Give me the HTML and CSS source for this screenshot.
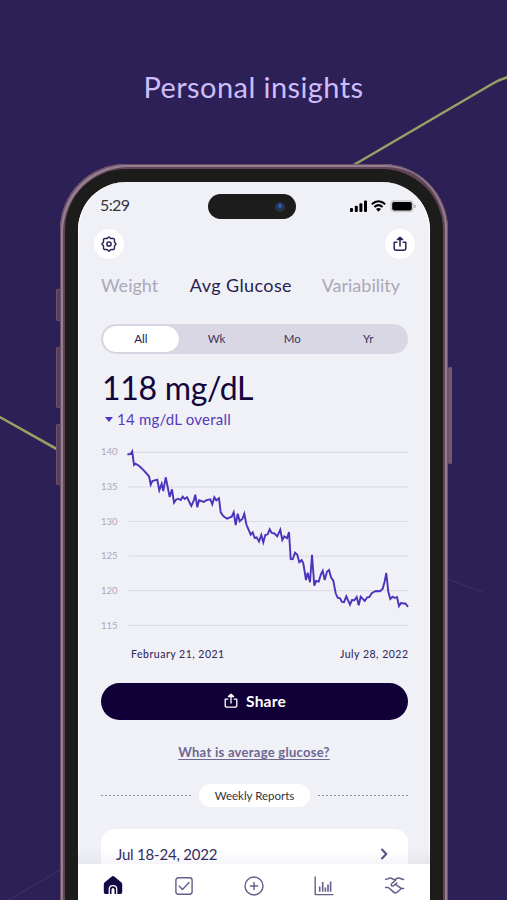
FILE: index.html
```
<!doctype html>
<html lang="en">
<head>
<meta charset="utf-8">
<meta name="viewport" content="width=device-width, initial-scale=1">
<title>Personal insights</title>
<link rel="stylesheet" href="styles.css">
</head>
<body>
<svg class="trend" viewBox="0 0 507 900" fill="none">
<path class="trend-line" d="M352 166 L492 84 Q500 79 510 76.5"/>
<path class="trend-line" d="M-2 416 L62 452"/>
<path class="trend-faint" d="M448 579 L482 592"/>
<path class="trend-faint" d="M0 905 L62 869"/>
</svg>

<h1 class="headline">Personal insights</h1>

<div class="phone">
<span class="key key-mute"></span>
<span class="key key-up"></span>
<span class="key key-down"></span>
<span class="key key-power"></span>
<div class="bezel">
<div class="screen">
<div class="island"><span class="lens"></span></div>

<header class="status">
<span class="time">5:29</span>
<svg class="status-icons" width="68" height="14" viewBox="0 0 68 14">
<rect x="1" y="9" width="3" height="4" rx="1"/>
<rect x="5.8" y="6.8" width="3" height="6.2" rx="1"/>
<rect x="10.4" y="4.2" width="3" height="8.8" rx="1"/>
<rect x="15" y="1.6" width="3" height="11.4" rx="1"/>
<path class="arc" d="M22.8 5.3 Q29.5 -.9 36.2 5.3 M25.4 8 Q29.5 4.2 33.6 8"/>
<path d="M27 10 Q29.5 8 32 10 L29.5 12.7 Z"/>
<rect class="cell" x="41.8" y="1.7" width="22.4" height="11" rx="3"/>
<rect x="43.2" y="3" width="19.6" height="8.4" rx="1.8"/>
<rect class="nub" x="65.2" y="5.6" width="1.4" height="3.4" rx=".7"/>
</svg>
</header>

<div class="toolbar">
<span class="round">
<svg width="18" height="18" viewBox="0 0 18 18">
<path d="M7.6 3.2 Q9 .8 10.4 3.2 Q11.1 3.8 12.1 3.5 Q14.8 2.9 14.5 5.9 Q14.2 6.9 14.8 7.6 Q17.2 9 14.8 10.4 Q14.2 11.1 14.5 12.1 Q14.8 15.1 12.1 14.5 Q11.1 14.2 10.4 14.8 Q9 17.2 7.6 14.8 Q6.9 14.2 5.9 14.5 Q3.2 15.1 3.5 12.1 Q3.8 11.1 3.2 10.4 Q.8 9 3.2 7.6 Q3.8 6.9 3.5 5.9 Q3.2 2.9 5.9 3.5 Q6.9 3.8 7.6 3.2 Z"/>
<circle cx="9" cy="9" r="2.1"/>
</svg>
</span>
<span class="round">
<svg width="16" height="18" viewBox="0 0 16 18">
<path d="M4.8 7.2 H2.2 V13.2 Q2.2 15.2 4.2 15.2 H11.8 Q13.8 15.2 13.8 13.2 V7.2 H11.2 M8 11 V2.6 M5.4 4.6 L8 2.2 L10.6 4.6 Z"/>
</svg>
</span>
</div>

<nav class="tabs">
<span>Weight</span>
<span class="active">Avg Glucose</span>
<span>Variability</span>
</nav>

<div class="range">
<span class="on">All</span><span>Wk</span><span>Mo</span><span>Yr</span>
</div>

<div class="value">118 mg/dL</div>
<div class="change"><i class="down"></i>14 mg/dL overall</div>

<svg class="chart" width="307" height="200" viewBox="0 0 307 200">
<g class="grid">
<path d="M28 12.3 H307 M28 46.9 H307 M28 81.5 H307 M28 116.1 H307 M28 150.7 H307 M28 185.3 H307"/>
</g>
<g class="axis">
<text x="0" y="15.3">140</text>
<text x="0" y="50">135</text>
<text x="0" y="84.7">130</text>
<text x="0" y="119.3">125</text>
<text x="0" y="153.9">120</text>
<text x="0" y="188.7">115</text>
</g>
<polyline class="series" points="27.2,14.3 29.8,14 31.2,11.5 33,25 34.5,23.7 38.3,26 43,30.7 48,36.3 49.7,44.7 51.3,41 56.3,39.7 58.3,50.3 60.7,43.7 62.3,51 64.7,37.3 68.7,57 71,49.3 73,62.7 75,59.7 77.3,58.7 79.7,60 81.7,56.7 83.7,59 86,57.3 90.3,66 92.7,60.7 94.3,54.7 96.3,67.3 98,60.3 103,62 105,60.3 109.3,59.3 111.3,64.3 113.3,57.3 115.3,60.3 118,58.3 119.7,72.3 122.3,76 126,78.7 130.7,76.7 132.7,72.3 134.7,85 136.7,73.7 138.7,81.3 141.3,79 143.3,73.7 145.3,84.3 149.7,94.7 151.7,92.3 153.7,98 155.7,97.3 158,101.5 160.3,95 162.3,102.3 164.3,95 166.7,94.3 168.7,89.3 170.7,93 173.5,93.5 176.3,96.3 179.3,89.7 181.3,100 183.3,96.3 186,98.3 188,92 189.7,119 191.7,119.3 194,112.7 196.3,114.7 198.3,122.3 200.7,120 202.3,123.3 205,140 206.7,132.7 209,142.3 211,114.7 213.3,145.7 215,141 217.7,141.7 220,134 221.7,130.7 223.7,140 226,131.7 228,130 230,137.3 232.3,140.7 234.7,153.3 236.7,157.7 239,158.3 241,162 243,162.3 245.3,156.3 249,164.7 251,160 253.3,160.3 255.7,157 257.7,165.3 259.7,156.7 263.7,161 266.3,157.3 268.3,157 270.7,153.3 274.7,151 279,151.3 281.7,148.7 283.7,141.3 285.3,133 287.3,151.7 289.3,159 291.7,156.7 293.7,158 296,157 298,166 300,163 304.7,163.7 306.5,166.3"/>
</svg>

<div class="dates"><span>February 21, 2021</span><span class="to">July 28, 2022</span></div>

<div class="share">
<svg width="16" height="18" viewBox="0 0 16 18">
<path d="M4.8 7.2 H2.2 V13.2 Q2.2 15.2 4.2 15.2 H11.8 Q13.8 15.2 13.8 13.2 V7.2 H11.2 M8 11 V2.6 M5.4 4.6 L8 2.2 L10.6 4.6 Z"/>
</svg>
<span>Share</span>
</div>

<div class="help"><a>What is average glucose?</a></div>

<div class="divider">
<i class="dots"></i>
<span class="pill">Weekly Reports</span>
<i class="dots"></i>
</div>

<div class="reports">
<div class="report">
<span>Jul 18-24, 2022</span>
<svg width="8" height="12" viewBox="0 0 8 12"><path d="M2 1.5 L6.3 6 L2 10.5"/></svg>
</div>
</div>

<footer class="dock">
<svg class="home" width="22" height="22" viewBox="0 0 22 22">
<path d="M11 1 Q11.6 1 12.2 1.5 L19.2 7.3 Q20.2 8.2 20.2 9.3 V17.2 Q20.2 19 18.4 19 H15.4 V14.4 Q15.4 10 11 10 Q6.6 10 6.6 14.4 V19 H3.6 Q1.8 19 1.8 17.2 V9.3 Q1.8 8.2 2.8 7.3 L9.8 1.5 Q10.4 1 11 1 Z"/>
<path d="M7.9 19 V14.4 Q7.9 11.3 11 11.3 Q14.1 11.3 14.1 14.4 V19 H12.5 V14.8 Q12.5 13 11 13 Q9.5 13 9.5 14.8 V19 Z"/>
</svg>
<svg width="22" height="22" viewBox="0 0 22 22">
<rect x="2.9" y="2.8" width="16.2" height="16.4" rx="2.4"/>
<path d="M6.3 11.2 L9.5 14.4 L16 7.6"/>
</svg>
<svg width="22" height="22" viewBox="0 0 22 22">
<circle cx="11" cy="11" r="9"/>
<path d="M11 7.4 V14.6 M7.4 11 H14.6"/>
</svg>
<svg width="22" height="22" viewBox="0 0 22 22">
<path d="M2.2 2 V19.6 H20"/>
<path class="bars" d="M6.7 16.8 V11.6 M9.7 16.8 V7 M12.4 16.8 V12.4 M15 16.8 V9.6 M17.6 16.8 V6.4"/>
</svg>
<svg class="hands" width="22" height="22" viewBox="0 0 22 22">
<path d="M1.6 4.2 C4.2 4.4 4.2 3 6.3 3 C8.4 3 8.8 4.8 10.4 4.7 C12 4.6 12.4 3 14.8 3 C17 3 17.4 4.6 19.6 4.4"/>
<path d="M1.6 12.4 H4 C5.4 12.6 9 17.4 11 18 C12.8 18.2 15.4 15.4 17.2 13.6 H19.6"/>
<path d="M11.8 5 L7.4 9 C6.6 11.6 9.4 11.6 10.6 9.8 L12.8 8 M11.6 9.4 L17.2 13.4"/>
</svg>
</footer>
</div>
</div>
</div>
</body>
</html>
```
FILE: styles.css
```
html, body { margin: 0; padding: 0; }
body { position: relative; width: 507px; height: 900px; overflow: hidden; background: #2d2057; color: #211a50; font-family: Lato, "Noto Sans", sans-serif; }
svg { fill: none; stroke-linecap: round; stroke-linejoin: round; flex: none; }

/* background lines run behind the phone */
.trend { position: absolute; inset: 0; width: 507px; height: 900px; }
.trend-line { stroke: #97a064; stroke-width: 2.6; }
.trend-faint { stroke: #3b315e; stroke-width: 1.2; }

.headline { position: relative; margin: 0; padding-top: 67px; height: 97px; line-height: 40px; text-align: center; font-size: 29px; font-weight: 400; letter-spacing: 0.42px; color: #cebdfa; }

.phone { position: relative; box-sizing: border-box; width: 388px; height: 736px; margin-left: 60px; padding: 5px 5px 0; border-radius: 66px 66px 0 0; background: #604558; box-shadow: inset 1px 1px #6b5268, inset -1px 0 #6b5268, inset 3px 3px #967d90, inset -3px 0 #967d90; }
.bezel { box-sizing: border-box; height: 731px; padding: 13px 13px 0; border-radius: 61px 61px 0 0; background: #1c1d1b; }
.screen { position: relative; display: flex; flex-direction: column; height: 718px; width: 352px; border-radius: 48px 48px 0 0; background: #f0f0f7; overflow: hidden; box-shadow: inset 1px 0 #fff, inset -1px 0 #fff; }
.screen > * { flex-shrink: 0; }

.key { position: absolute; width: 4px; left: -4px; box-sizing: border-box; background: #573f5b; border: 1px solid #6d5269; border-right: 0; border-radius: 2px 0 0 2px; }
.key-mute { top: 125px; height: 32px; }
.key-up { top: 183px; height: 61px; }
.key-down { top: 260px; height: 61px; }
.key-power { left: 388px; top: 203px; height: 97px; background: #745a70; }

.island { position: absolute; left: 130px; top: 12px; width: 88px; height: 25px; border-radius: 13px; background: #1b1c1b; }
.lens { position: absolute; right: 11px; top: 8px; width: 10px; height: 10px; border-radius: 50%; background: radial-gradient(circle at 50% 40%, #2e62b0 0 1px, #1d3156 3px, #303238 5px); }

.status { display: flex; align-items: center; justify-content: space-between; height: 46px; padding: 0 13px 0 22px; }
.time { padding-bottom: 2px; font-size: 16px; letter-spacing: -0.6px; color: #34343c; }
.status-icons { fill: #000; padding-top: 2px; }
.status-icons .arc { fill: none; stroke: #000; stroke-width: 2; stroke-linecap: butt; }
.status-icons .cell { fill: #d5d5da; stroke: #b5b5bb; stroke-width: 0.6; }
.status-icons .nub { fill: #aaa; }

.toolbar { display: flex; justify-content: space-between; padding: 1px 15px 0 16px; }
.round { display: flex; align-items: center; justify-content: center; width: 30px; height: 30px; border-radius: 50%; background: #fff; }
.round svg { stroke: #2b2357; stroke-width: 1.5; }

.tabs { display: flex; align-items: center; justify-content: space-between; box-sizing: border-box; height: 54px; padding: 0 30px 2px 23px; font-size: 18px; color: #aaa8ba; }
.tabs .active { margin-left: 2px; letter-spacing: 0.4px; color: #292052; }

.range { display: grid; grid-template-columns: repeat(4, 1fr); box-sizing: border-box; height: 30px; margin: 10.5px 22px 0 23px; padding: 2px; border-radius: 15px; background: #d8d7e3; font-size: 11.5px; line-height: 26px; text-align: center; color: #3c3562; }
.range .on { background: #fff; border-radius: 13px; box-shadow: 0 0 1px #b9b7cc; color: #211a50; }

.value { margin: 13.5px 0 0 24px; height: 42px; line-height: 42px; font-size: 32px; letter-spacing: -0.3px; color: #12053c; }
.change { display: flex; align-items: center; gap: 4px; margin-left: 27px; height: 20px; font-size: 15px; letter-spacing: 0.22px; color: #5538bd; }
.down { border: 4px solid transparent; border-top: 5px solid #5034bd; border-bottom: 0; }

.chart { display: block; margin: 11px 0 0 23px; overflow: visible; }
.grid path { stroke: #dddde6; stroke-width: 1.2; }
.axis text { fill: #aba9bd; font-size: 9.5px; font-family: Lato, sans-serif; }
.series { stroke: #4d32bc; stroke-width: 1.9; stroke-linejoin: miter; }

.dates { display: flex; justify-content: space-between; margin: 4px 22px 0 53px; height: 20px; line-height: 20px; font-size: 10.5px; font-weight: 500; letter-spacing: 0.5px; color: #352d5f; }
.dates .to { margin-right: -0.5px; }

.share { display: flex; align-items: center; justify-content: center; gap: 7px; box-sizing: border-box; height: 37px; margin: 19px 22px 0 23px; padding-bottom: 1px; border-radius: 19px; background: #100037; color: #fff; font-size: 15.5px; font-weight: 700; letter-spacing: 0.2px; }
.share svg { stroke: #fff; stroke-width: 1.3; }

.help { margin-top: 22px; height: 20px; line-height: 20px; text-align: center; font-size: 13px; font-weight: 700; letter-spacing: 0.27px; color: #6d6790; }
.help a { text-decoration: underline; text-underline-offset: 2px; }

.divider { display: flex; align-items: center; gap: 8px; margin: 22px 22px 0 23px; height: 23px; }
.dots { flex: 1; height: 1px; background: repeating-linear-gradient(90deg, #8f8e9c 0 2px, transparent 2px 4px); }
.pill { width: 111px; height: 23px; border-radius: 12px; background: #fff; text-align: center; line-height: 23px; font-size: 11.5px; color: #34323f; }

.reports { height: 35px; padding: 22px 22px 0 23px; background: linear-gradient(transparent 70%, #e7e7ee); }
.report { display: flex; align-items: center; justify-content: space-between; box-sizing: border-box; height: 50px; padding: 0 20px 0 15px; border-radius: 14px; background: linear-gradient(#fff 20px, #f5f5f9 36px); font-size: 15px; letter-spacing: -0.2px; color: #352c61; }
.report svg { stroke: #574f80; stroke-width: 2; }

.dock { position: relative; box-sizing: border-box; display: grid; grid-template-columns: repeat(5, 1fr); justify-items: center; align-items: start; padding-top: 11px; height: 36px; background: #fff; }
.dock svg { stroke: #655e8b; stroke-width: 1.4; }
.dock .home { fill: #130744; stroke: none; }
.dock .bars { stroke-width: 1.6; stroke-linecap: butt; }
.dock .hands { stroke-width: 1.5; }
```
